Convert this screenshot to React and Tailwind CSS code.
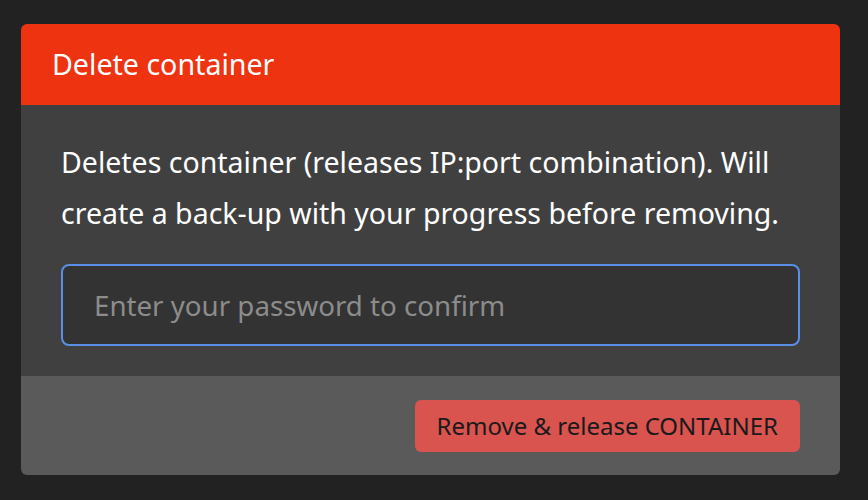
import React from 'react';

const App = () => {
  return (
    <div className="w-[868px] h-[500px] bg-[#222222] pt-[24px] pl-[21px]" style={{ fontFamily: '"Noto Sans", "Open Sans", sans-serif' }}>
      <div className="w-[819px] h-[451px] rounded-[6px] overflow-hidden flex flex-col">
        {/* Header */}
        <div className="h-[81px] bg-[#ee3311] flex items-center px-[31px]">
          <h1 className="text-[28.6px] text-white leading-none">Delete container</h1>
        </div>

        {/* Body */}
        <div className="bg-[#404040] h-[271px] px-[40px] pt-[32px]">
          <p className="text-[28.5px] leading-[51px] text-white">
            Deletes container (releases IP:port combination). Will create a back-up with your progress before removing.
          </p>
          <input
            type="password"
            placeholder="Enter your password to confirm"
            className="mt-[25px] w-full h-[82px] rounded-[8px] border-2 border-[#5b8fe6] bg-[#333333] px-[31px] text-[27.7px] text-white placeholder-[#8c8c8c] outline-none"
          />
        </div>

        {/* Footer */}
        <div className="flex-1 bg-[#5a5a5a] flex justify-end px-[40px] pt-[24px]">
          <button className="h-[52px] px-[22px] rounded-[6px] bg-[#d9534f] text-[24px] text-[#1a1a1a]">
            Remove &amp; release CONTAINER
          </button>
        </div>
      </div>
    </div>
  );
};

export default App;
